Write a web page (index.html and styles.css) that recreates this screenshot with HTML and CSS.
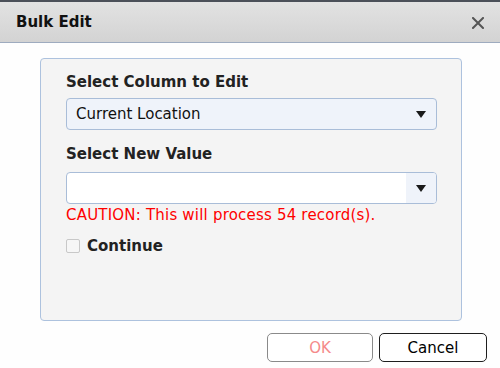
FILE: index.html
```html
<!DOCTYPE html>
<html>
<head>
<meta charset="utf-8">
<link rel="stylesheet" href="styles.css">
</head>
<body>
<div class="dialog">
  <div class="titlebar">
    <span class="title">Bulk Edit</span>
    <span class="close" aria-label="Close">
      <svg width="12" height="12" viewBox="0 0 12 12"><path d="M1 1 L11 11 M11 1 L1 11" stroke="#555" stroke-width="2" fill="none" stroke-linecap="square"/></svg>
    </span>
  </div>
  <div class="content">
    <div class="panel">
      <div class="field-label">Select Column to Edit</div>
      <div class="select filled"><span class="value">Current Location</span><span class="arrow"><i class="tri"></i></span></div>
      <div class="field-label second">Select New Value</div>
      <div class="select empty"><span class="value"></span><span class="arrow"><i class="tri"></i></span></div>
      <div class="caution">CAUTION: This will process 54 record(s).</div>
      <label class="check"><span class="box"></span><span class="check-text">Continue</span></label>
    </div>
  </div>
  <div class="footer">
    <button class="btn ok">OK</button>
    <button class="btn cancel">Cancel</button>
  </div>
</div>
</body>
</html>
```
FILE: styles.css
```css
html, body {
  margin: 0;
  padding: 0;
  background: #ffffff;
}
body {
  font-family: "DejaVu Sans", Verdana, sans-serif;
  font-size: 15px;
  color: #1e1e1e;
}
.dialog {
  width: 500px;
  height: 368px;
  border-top: 2px solid #4b5059;
  box-sizing: border-box;
  background: #fefefe;
}
.titlebar {
  height: 40px;
  border-bottom: 1px solid #9eabbf;
  background: linear-gradient(#e2e2e2, #d3d3d3);
  display: flex;
  align-items: center;
  justify-content: space-between;
  padding: 0 16px 0 16px;
}
.title {
  font-weight: bold;
  font-size: 15px;
  line-height: 18px;
  color: #111;
}
.close {
  display: flex;
  width: 12px;
  height: 12px;
  margin-top: 1px;
}
.content {
  padding: 15px 0 0 40px;
}
.panel {
  box-sizing: border-box;
  width: 422px;
  height: 263px;
  border: 1px solid #adc2de;
  border-radius: 4px;
  background: #f4f4f4;
  padding: 14px 24px 0 25px;
}
.field-label {
  font-weight: bold;
  line-height: 18px;
  color: #222;
  margin-bottom: 7px;
}
.field-label.second {
  margin-top: 15px;
  margin-bottom: 9px;
}
.select {
  box-sizing: border-box;
  height: 32px;
  border: 1px solid #a9bdd8;
  border-radius: 4px;
  display: flex;
  align-items: stretch;
  overflow: hidden;
}
.select.filled {
  background: #eff3fa;
}
.select.empty {
  background: #ffffff;
}
.value {
  flex: 1;
  display: flex;
  align-items: center;
  padding-left: 9px;
  color: #111;
  line-height: 18px;
}
.arrow {
  width: 30px;
  display: flex;
  align-items: center;
  justify-content: center;
}
.select.empty .arrow {
  background: #eff3fa;
}
.tri {
  width: 0;
  height: 0;
  border-left: 5px solid transparent;
  border-right: 5px solid transparent;
  border-top: 7px solid #1a1a1a;
}
.caution {
  margin-top: 2px;
  line-height: 18px;
  color: #ff0000;
  letter-spacing: 0.2px;
}
.check {
  margin-top: 13px;
  display: flex;
  align-items: center;
  height: 18px;
}
.box {
  box-sizing: border-box;
  width: 14px;
  height: 14px;
  border: 1px solid #c8c8c8;
  border-radius: 2px;
  background: #f6f6f6;
  margin-right: 7px;
}
.check-text {
  font-weight: bold;
  color: #222;
  line-height: 18px;
}
.footer {
  display: flex;
  justify-content: flex-end;
  gap: 6px;
  padding: 12px 13px 0 0;
}
.btn {
  box-sizing: border-box;
  height: 29px;
  border-radius: 5px;
  background: #ffffff;
  font-family: "DejaVu Sans", Verdana, sans-serif;
  font-size: 15px;
  padding: 0;
}
.btn.ok {
  width: 106px;
  border: 1px solid #8a8a8a;
  color: #f58a8a;
}
.btn.cancel {
  width: 108px;
  border: 1px solid #1e1e1e;
  color: #000;
}
```
